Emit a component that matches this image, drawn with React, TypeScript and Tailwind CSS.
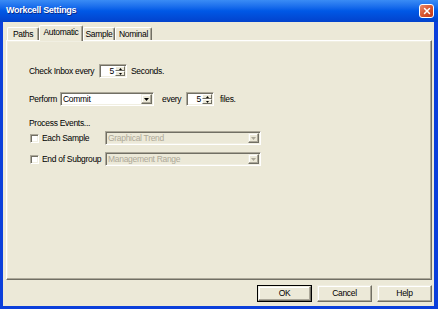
import React from "react"
import { X } from "lucide-react"

const sunken =
  "border border-t-[#ACA899] border-l-[#ACA899] border-b-white border-r-white shadow-[inset_1px_1px_0_#716F64,inset_-1px_-1px_0_#F1EFE2]"
const raised =
  "border border-t-[#F1EFE2] border-l-[#F1EFE2] border-b-[#716F64] border-r-[#716F64] shadow-[inset_-1px_-1px_0_#ACA899,inset_1px_1px_0_#ffffff] bg-[#ECE9D8]"
const raisedSmall =
  "border border-t-white border-l-white border-b-[#716F64] border-r-[#716F64] bg-[#ECE9D8]"

function Tri({ down, color = "#000" }: { down?: boolean; color?: string }) {
  return (
    <svg width="5" height="3" viewBox="0 0 5 3" className="block">
      {down ? <path d="M0 0H5L2.5 3Z" fill={color} /> : <path d="M0 3H5L2.5 0Z" fill={color} />}
    </svg>
  )
}

function Spin({ value }: { value: string }) {
  return (
    <div className={`flex h-[14px] w-[28px] shrink-0 bg-white ${sunken}`}>
      <div className="flex-1 pr-[1px] text-right leading-[12px]">{value}</div>
      <div className="flex w-[11px] flex-col py-[1px] pr-[1px]">
        <div className={`flex flex-1 items-center justify-center ${raisedSmall}`}>
          <svg width="3" height="2" viewBox="0 0 3 2"><path d="M0 2H3L1.5 0Z" fill="#000" /></svg>
        </div>
        <div className={`flex flex-1 items-center justify-center ${raisedSmall}`}>
          <svg width="3" height="2" viewBox="0 0 3 2"><path d="M0 0H3L1.5 2Z" fill="#000" /></svg>
        </div>
      </div>
    </div>
  )
}

function Combo({ text, className, disabled }: { text: string; className: string; disabled?: boolean }) {
  return (
    <div
      className={`flex h-[14px] shrink-0 ${sunken} ${className} ${
        disabled ? "bg-[#ECE9D8] text-[#ACA899]" : "bg-white text-black"
      }`}
    >
      <div className="flex-1 pl-[2px] leading-[12px]">{text}</div>
      <div className={`my-[1px] mr-[1px] flex w-[11px] items-center justify-center ${raised}`}>
        <Tri down color={disabled ? "#ACA899" : "#000"} />
      </div>
    </div>
  )
}

function Check() {
  return <div className={`h-[9px] w-[9px] bg-white ${sunken}`} />
}

function Tab({ label, selected, className }: { label: string; selected?: boolean; className: string }) {
  return (
    <div
      className={`flex shrink-0 items-center justify-center rounded-t-[2px] border-l border-t border-r border-l-white border-t-white border-r-[#716F64] bg-[#ECE9D8] shadow-[inset_-1px_0_0_#ACA899] ${className} ${
        selected ? "relative z-10 -mb-[1px] h-[16px] pb-[2px]" : "h-[13px]"
      }`}
    >
      {label}
    </div>
  )
}

function Btn({ label, def }: { label: string; def?: boolean }) {
  return (
    <div className={`h-[17px] w-[55px] ${def ? "border border-black" : ""}`}>
      <div className={`flex h-full w-full items-center justify-center ${raised}`}>{label}</div>
    </div>
  )
}

export default function App() {
  return (
    <div
      className="flex h-[309px] w-[438px] flex-col whitespace-nowrap bg-[#0B3FDB] text-[8.5px] text-black"
      style={{ fontFamily: '"Liberation Sans", Arial, sans-serif', letterSpacing: "-0.3px" }}
    >
      {/* Title bar */}
      <div className="flex h-[22px] items-center bg-gradient-to-b from-[#3a8cf5] via-[#0058e6] to-[#0342cc] pl-[6px] pr-[4px]">
        <span className="flex-1 text-[9px] font-bold text-white [text-shadow:1px_1px_0_#0a2a8a]">
          Workcell Settings
        </span>
        <div className="flex h-[14px] w-[15px] items-center justify-center rounded-[3px] border border-white bg-gradient-to-br from-[#ea8a6c] via-[#d8552f] to-[#c2381a]">
          <X className="h-[10px] w-[10px] text-white" strokeWidth={3.5} />
        </div>
      </div>

      {/* Body */}
      <div className="mb-[3px] ml-[3px] mr-[4px] flex flex-1 flex-col bg-[#ECE9D8] pl-[3px] pr-[2px] pt-[3px]">
        {/* Tabs */}
        <div className="ml-[1px] flex h-[15px] items-end">
          <Tab label="Paths" className="w-[32px]" />
          <Tab label="Automatic" selected className="w-[44px]" />
          <Tab label="Sample" className="w-[32px]" />
          <Tab label="Nominal" className="w-[37px]" />
        </div>

        {/* Panel */}
        <div className="flex h-[240px] flex-col border border-t-white border-l-white border-b-[#716F64] border-r-[#716F64] pl-[22px] pt-[23px] shadow-[inset_-1px_-1px_0_#ACA899,inset_1px_1px_0_#F1EFE2]">
          <div className="flex h-[14px] items-center">
            <span className="w-[70px] shrink-0">Check Inbox every</span>
            <Spin value="5" />
            <span className="ml-[4px]">Seconds.</span>
          </div>

          <div className="mt-[14px] flex h-[14px] items-center">
            <span className="w-[31px] shrink-0">Perform</span>
            <Combo text="Commit" className="w-[94px]" />
            <span className="ml-[8px] w-[24px] shrink-0">every</span>
            <Spin value="5" />
            <span className="ml-[6px]">files.</span>
          </div>

          <div className="mt-[12px] h-[10px] leading-[10px]">Process Events...</div>

          <div className="mt-[3px] flex h-[14px] items-center">
            <div className="ml-[1px] w-[12px] shrink-0">
              <Check />
            </div>
            <span className="w-[63px] shrink-0">Each Sample</span>
            <Combo text="Graphical Trend" className="w-[156px]" disabled />
          </div>

          <div className="mt-[7px] flex h-[14px] items-center">
            <div className="ml-[1px] w-[12px] shrink-0">
              <Check />
            </div>
            <span className="w-[63px] shrink-0">End of Subgroup</span>
            <Combo text="Management Range" className="w-[156px]" disabled />
          </div>
        </div>

        {/* Buttons */}
        <div className="mt-[5px] flex justify-end gap-[5px]">
          <Btn label="OK" def />
          <Btn label="Cancel" />
          <Btn label="Help" />
        </div>
      </div>
    </div>
  )
}
